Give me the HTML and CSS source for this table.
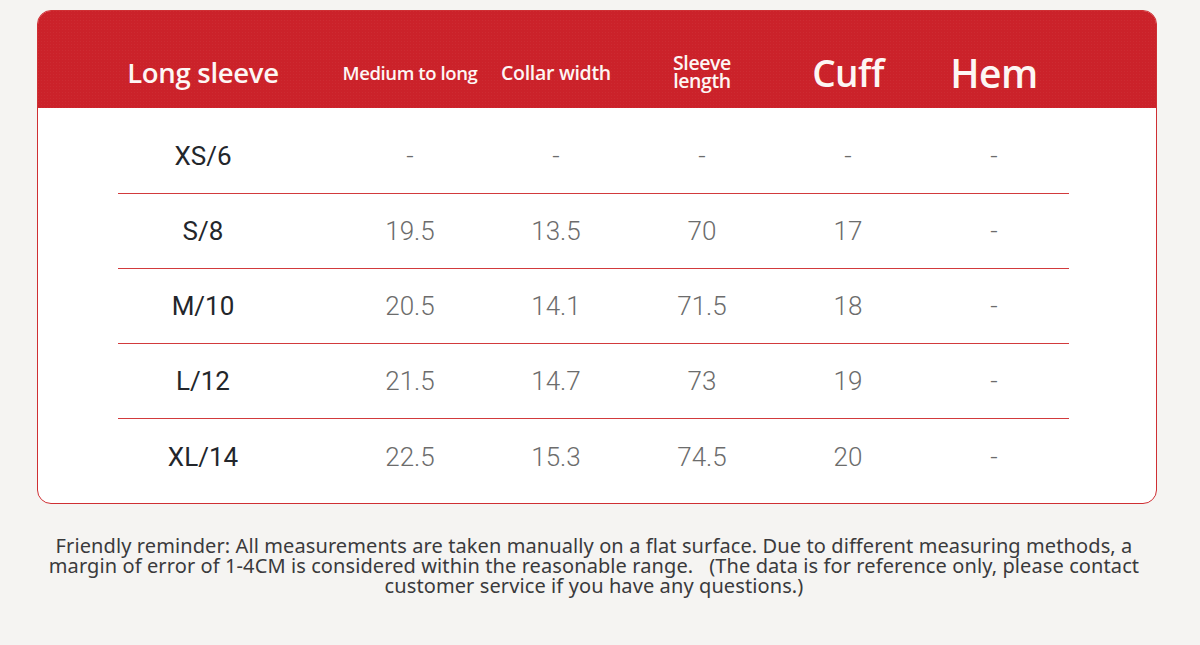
FILE: index.html
```html
<!DOCTYPE html>
<html lang="en">
<head>
<meta charset="utf-8">
<title>Size chart</title>
<link rel="stylesheet" href="styles.css">
</head>
<body>
<div class="page">
  <div class="card">
    <div class="head">
      <div class="grid">
        <div class="h h-first">Long sleeve</div>
        <div class="h h-medium">Medium to long</div>
        <div class="h h-collar">Collar width</div>
        <div class="h h-two">Sleeve<br>length</div>
        <div class="h h-big">Cuff</div>
        <div class="h h-big h-hem">Hem</div>
      </div>
    </div>
    <div class="body">
      <div class="grid row"><div class="size">XS/6</div><div class="val">-</div><div class="val">-</div><div class="val">-</div><div class="val">-</div><div class="val">-</div></div>
      <div class="grid row"><div class="size">S/8</div><div class="val">19.5</div><div class="val">13.5</div><div class="val">70</div><div class="val">17</div><div class="val">-</div></div>
      <div class="grid row"><div class="size">M/10</div><div class="val">20.5</div><div class="val">14.1</div><div class="val">71.5</div><div class="val">18</div><div class="val">-</div></div>
      <div class="grid row"><div class="size">L/12</div><div class="val">21.5</div><div class="val">14.7</div><div class="val">73</div><div class="val">19</div><div class="val">-</div></div>
      <div class="grid row last"><div class="size">XL/14</div><div class="val">22.5</div><div class="val">15.3</div><div class="val">74.5</div><div class="val">20</div><div class="val">-</div></div>
    </div>
  </div>
  <p class="note">Friendly reminder: All measurements are taken manually on a flat surface. Due to different measuring methods, a<br>margin of error of 1-4CM is considered within the reasonable range. &nbsp; (The data is for reference only, please contact<br>customer service if you have any questions.)</p>
</div>
</body>
</html>
```
FILE: styles.css
```css
html, body {
  margin: 0;
  padding: 0;
  background: #f5f4f2;
}
.page {
  width: 1200px;
  height: 645px;
  padding-top: 10px;
  box-sizing: border-box;
}
.card {
  margin-left: 37px;
  width: 1120px;
  height: 494px;
  box-sizing: border-box;
  border: 1px solid #cf2f33;
  border-radius: 14px;
  background: #ffffff;
  overflow: hidden;
}
.head {
  height: 98px;
  margin: -1px -1px 0 -1px;
  padding: 26px 0 0 81px;
  box-sizing: border-box;
  background: #cb222a;
  background-image: radial-gradient(rgba(255,255,255,0.04) 1px, transparent 1px);
  background-size: 3px 3px;
  color: #fdf6f4;
  font-family: "Open Sans", "Noto Sans", sans-serif;
  font-weight: 600;
}
.grid {
  display: grid;
  grid-template-columns: 219px repeat(5, 146px);
  width: 951px;
  align-items: center;
}
.head .grid {
  height: 72px;
}
.h {
  text-align: center;
  white-space: nowrap;
}
.h-first {
  padding-right: 49px;
  font-size: 27.5px;
  letter-spacing: -0.3px;
}
.h-medium {
  font-size: 18.5px;
  letter-spacing: -0.4px;
}
.h-collar {
  font-size: 19.5px;
  letter-spacing: -0.3px;
}
.h-two {
  font-size: 19.5px;
  line-height: 18px;
  letter-spacing: -0.4px;
}
.h-big {
  font-size: 37px;
  letter-spacing: -0.5px;
}
.h-hem {
  font-size: 39px;
}
.body {
  padding: 11px 0 0 80px;
}
.row {
  height: 75px;
  border-bottom: 1px solid #d23a3c;
  box-sizing: border-box;
  font-family: Roboto, "DejaVu Sans", sans-serif;
  font-size: 26px;
}
.row.last {
  border-bottom: none;
}
.size {
  padding-right: 49px;
  text-align: center;
  color: #23262b;
  font-weight: 400;
}
.val {
  text-align: center;
  color: #6c6c6c;
  font-weight: 300;
}
.note {
  margin: 32px 0 0 0;
  padding-right: 12px;
  text-align: center;
  font-family: "Noto Sans", "Open Sans", sans-serif;
  font-size: 20px;
  line-height: 20px;
  letter-spacing: 0.1px;
  color: #3a3a3c;
  white-space: nowrap;
}
```
